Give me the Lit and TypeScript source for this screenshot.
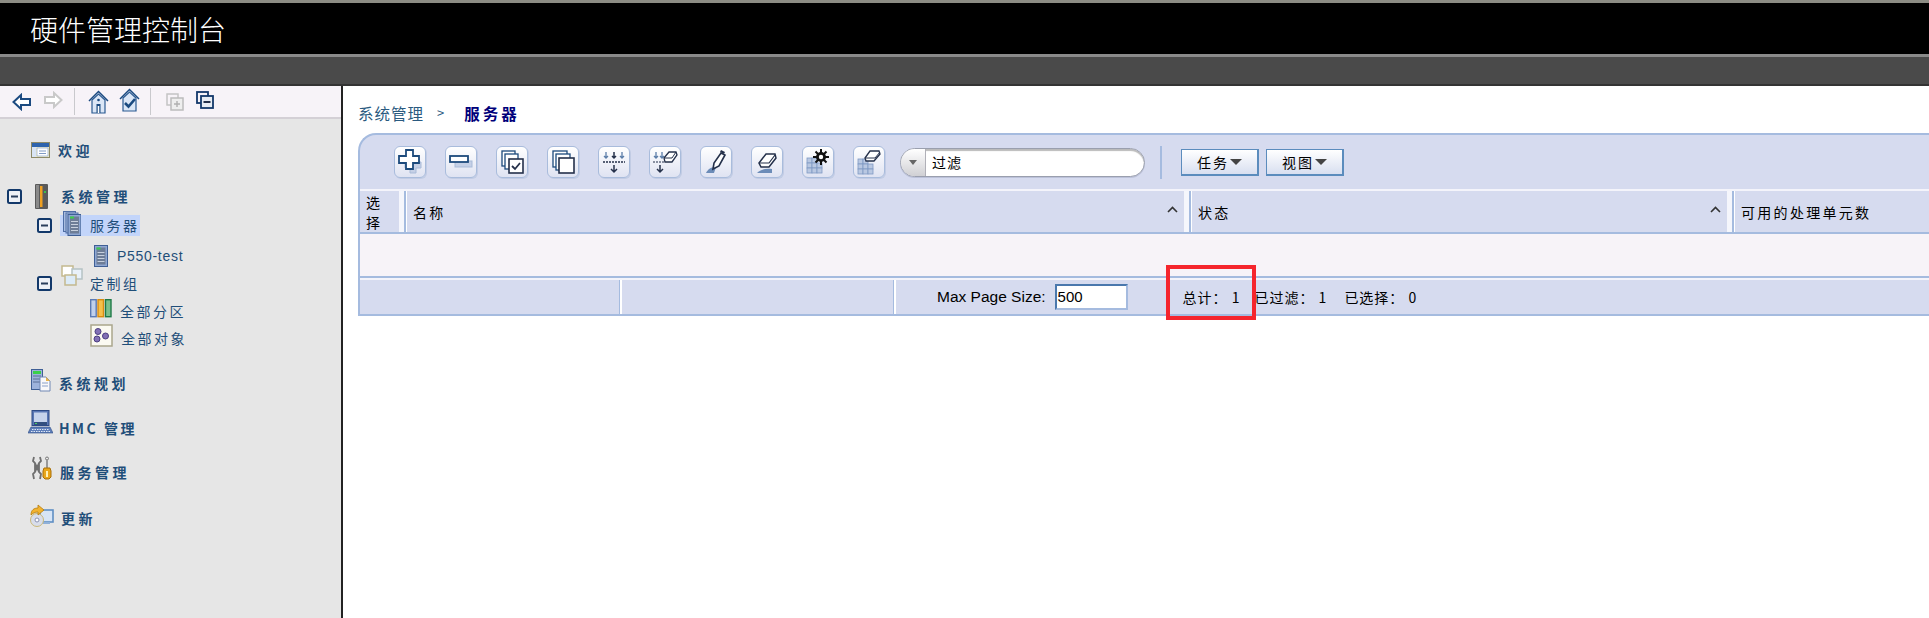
import { LitElement, html, css, svg } from "lit";
import { customElement } from "lit/decorators.js";

const NAVY = "#1c4a7c";
const expander = html`<svg class="exp" width="15" height="15" viewBox="0 0 15 15"><rect x="1" y="1" width="13" height="13" rx="1.5" fill="#eef1f6" stroke="#12386a" stroke-width="2"/><rect x="4" y="6.5" width="7" height="2" fill="#2a3f5c"/></svg>`;

const tb = (body: unknown) => html`<button class="tbtn"><svg width="26" height="26" viewBox="0 0 26 26" fill="none">${body}</svg></button>`;

const toolIcons = [
  svg`<path d="M10 9V4h6v5h5v6h-5v5h-6v-5H5V9z" transform="translate(3 4)" fill="#c5d0e6" stroke="#a9bbd8"/><path d="M9 7V1h7v6h6v7h-6v6H9v-6H2V7z" fill="#fff" stroke="${NAVY}" stroke-width="1.8"/>`,
  svg`<rect x="7" y="12" width="17" height="6" fill="#c5d0e6" stroke="#a9bbd8"/><rect x="2" y="7" width="18" height="6" fill="#fff" stroke="${NAVY}" stroke-width="1.8"/>`,
  svg`<rect x="3" y="2" width="13" height="15" fill="#fff" stroke="${NAVY}" stroke-width="1.3"/><rect x="6" y="5" width="13" height="15" fill="#fff" stroke="${NAVY}" stroke-width="1.3"/><rect x="10" y="10" width="14" height="14" fill="#fff" stroke="#24304a" stroke-width="1.6"/><path d="M13 17l3 3 5-6" stroke="#24304a" stroke-width="1.8"/>`,
  svg`<rect x="3" y="2" width="14" height="16" fill="#fff" stroke="${NAVY}" stroke-width="1.3"/><rect x="6" y="5" width="14" height="16" fill="#fff" stroke="${NAVY}" stroke-width="1.3"/><rect x="9" y="9" width="15" height="15" fill="#fff" stroke="#24304a" stroke-width="1.6"/>`,
  svg`<path d="M5 3v6M3 7l2 2 2-2M21 3v6M19 7l2 2 2-2" stroke="#5a7ca8" stroke-width="1.3"/><path d="M13 3v6M11 7l2 2 2-2" stroke="#24304a" stroke-width="1.5"/><path d="M2 13h22" stroke="#24304a" stroke-width="1.3" stroke-dasharray="2 1"/><path d="M13 16v7M10 20l3 3 3-3" stroke="#24304a" stroke-width="1.5"/>`,
  svg`<path d="M4 3v6M2 7l2 2 2-2M10 3v6M8 7l2 2 2-2" stroke="#5a7ca8" stroke-width="1.3"/><path d="M1 13h11" stroke="#24304a" stroke-dasharray="2 1"/><path d="M8 16v7M5 20l3 3 3-3" stroke="#24304a" stroke-width="1.5"/><path d="M12 9l5-6h7l1 3-5 7h-7z" fill="#fff" stroke="#24304a" stroke-width="1.3"/><path d="M12 9h8l4-6" stroke="#24304a"/>`,
  svg`<path d="M3 24c2-4 5-6 10-6l-2 6z" fill="#6c8cb8"/><path d="M10 20l1-6 7-10 4 2-6 11z" fill="#fff" stroke="#24304a" stroke-width="1.6"/><path d="M17 3l1-2 4 2-1 2z" fill="#24304a"/>`,
  svg`<path d="M3 24c3-3 8-5 15-4v4z" fill="#6c8cb8"/><path d="M5 14l7-9h9l1 4-7 9H7z" fill="#fff" stroke="#24304a" stroke-width="1.5"/><path d="M5 14h10l6-8" stroke="#24304a" stroke-width="1.2"/>`,
  svg`<g fill="#b9c8e2" stroke="#7f9ac4" stroke-width=".8"><rect x="2" y="9" width="5" height="5"/><rect x="7" y="9" width="5" height="5"/><rect x="2" y="14" width="5" height="5"/><rect x="7" y="14" width="5" height="5"/><rect x="12" y="14" width="5" height="5"/><rect x="2" y="19" width="5" height="5"/><rect x="7" y="19" width="5" height="5"/><rect x="12" y="19" width="5" height="5"/></g><circle cx="16" cy="8" r="5" fill="#111"/><path d="M16 0v16M8 8h16M10.500 2.500l11 11M21.500 2.500l-11 11" stroke="#111" stroke-width="2"/><circle cx="16" cy="8" r="2.200" fill="#fff"/>`,
  svg`<g fill="#b9c8e2" stroke="#7f9ac4" stroke-width=".8"><rect x="2" y="10" width="5" height="5"/><rect x="7" y="10" width="5" height="5"/><rect x="2" y="15" width="5" height="5"/><rect x="7" y="15" width="5" height="5"/><rect x="12" y="15" width="5" height="5"/><rect x="2" y="20" width="5" height="5"/><rect x="7" y="20" width="5" height="5"/><rect x="12" y="20" width="5" height="5"/></g><path d="M9 9l5-7h9l1 3-6 7H10z" fill="#fff" stroke="#24304a" stroke-width="1.3"/><path d="M9 9h10l5-6" stroke="#24304a"/>`,
];

const serverTall = (x: number, y: number) => svg`<g transform="translate(${x} ${y})"><rect width="13" height="21" fill="#8ea7d2" stroke="#3f5f95"/><rect x="2" y="2" width="9" height="17" fill="#6d7d97"/><rect x="2" y="2" width="4" height="2" fill="#3bd04a"/><path d="M3 7h7M3 10h7M3 13h7M3 16h7" stroke="#c7d0de"/></g>`;

const icons: Record<string, unknown> = {
  welcome: html`<svg width="19" height="16" viewBox="0 0 19 16"><rect x=".5" y=".5" width="18" height="15" fill="#f6efc8" stroke="#8d8a68"/><rect x="1" y="1" width="17" height="4" fill="#2e64ad"/><rect x="1" y="5" width="4" height="10" fill="#d9e5f5"/><rect x="6" y="6" width="11" height="8" fill="#fff" stroke="#8aa6d0" stroke-width=".7"/><path d="M8 9h7M8 11.500h7" stroke="#7f9ac4"/></svg>`,
  sys: html`<svg width="13" height="25" viewBox="0 0 13 25"><rect width="13" height="25" rx="1" fill="#5a5a5a"/><rect x="1" y="1" width="3" height="23" fill="#8a8a8a"/><rect x="5" y="2" width="2.500" height="21" fill="#f0a020"/><rect x="9" y="7" width="2" height="2" fill="#3bc04a"/></svg>`,
  servers: html`<svg width="18" height="25" viewBox="0 0 18 25"><rect x=".5" y=".5" width="12" height="20" fill="#a9bde0" stroke="#4f6ea5"/><rect x="3" y="2" width="12" height="20" fill="#a9bde0" stroke="#4f6ea5"/>${serverTall(5, 3.5)}</svg>`,
  server: html`<svg width="14" height="22" viewBox="0 0 14 22">${serverTall(.5, .5)}</svg>`,
  group: html`<svg width="22" height="22" viewBox="0 0 22 22"><rect x="1" y="1" width="11" height="10" fill="#fff" stroke="#c4b98e" stroke-width="1.500"/><rect x="11" y="4" width="10" height="10" fill="#e9f1fa" stroke="#b5c2c4" stroke-width="1.500"/><rect x="4" y="10" width="11" height="10" fill="#dcebf8" stroke="#c4b98e" stroke-width="1.500"/></svg>`,
  parts: html`<svg width="22" height="19" viewBox="0 0 22 19"><rect x=".7" y=".7" width="5.500" height="17" fill="#c0d0ec" stroke="#5a7ab5" stroke-width="1.400"/><rect x="8" y=".7" width="5.500" height="17" fill="#f6c04a" stroke="#d98c10" stroke-width="1.400"/><rect x="15.500" y=".7" width="5.500" height="17" fill="#7cc08c" stroke="#1f7a48" stroke-width="1.400"/></svg>`,
  objs: html`<svg width="23" height="23" viewBox="0 0 23 23"><rect x="1" y="1" width="21" height="21" fill="#fbfaf2" stroke="#aaa68c" stroke-width="1.500"/><circle cx="8" cy="7.500" r="3" fill="#8270b5" stroke="#4c3f80"/><circle cx="7" cy="15" r="3" fill="#8270b5" stroke="#4c3f80"/><circle cx="15.500" cy="12" r="3" fill="#8270b5" stroke="#4c3f80"/></svg>`,
  plan: html`<svg width="20" height="23" viewBox="0 0 20 23"><rect x=".5" y=".5" width="11" height="20" fill="#9db3dc" stroke="#3f5f95"/><rect x="2" y="2" width="8" height="3" fill="#3bd04a"/><path d="M2 7h8M2 10h8M2 13h8" stroke="#5a6f96"/><path d="M9 8h6l4 4v10H9z" fill="#f8f8fa" stroke="#7088b4"/><path d="M15 8v4h4z" fill="#e8b34a"/><path d="M11 14h6M11 17h6" stroke="#8aa0c8"/></svg>`,
  hmc: html`<svg width="25" height="24" viewBox="0 0 25 24"><rect x="4" y=".5" width="17" height="15" fill="#5a78b5" stroke="#2c4a85"/><rect x="6" y="2.500" width="13" height="10" fill="#c6d4ec"/><rect x="6" y="12" width="13" height="3" fill="#33507f"/><rect x="7" y="13" width="2" height="1" fill="#4cd060"/><path d="M3 17h19l3 6H0z" fill="#5f7fba" stroke="#2c4a85" stroke-width=".6"/><path d="M4 19.500h17M3 21.500h19" stroke="#dfe8f6" stroke-dasharray="1.500 1"/></svg>`,
  svc: html`<svg width="21" height="24" viewBox="0 0 21 24"><path d="M3 1L2 5l2 2v9l-2 2 1 5M9 1l1 4-2 2v9l2 2-1 5M4 7l4 9M8 7l-4 9" fill="none" stroke="#6f6f6f" stroke-width="1.800"/><circle cx="16" cy="2.500" r="1.500" fill="none" stroke="#777"/><rect x="15" y="4" width="2" height="8" fill="#999"/><path d="M13 12h6l1 3v6l-2 2h-4l-2-2v-6z" fill="#e9a61a" stroke="#a86f08"/><rect x="15" y="15" width="2" height="6" fill="#fff2b8"/></svg>`,
  update: html`<svg width="24" height="23" viewBox="0 0 24 23"><rect x="10" y="6" width="13" height="12" fill="#d7e5f6" stroke="#5f8fc4" stroke-width="1.600"/><rect x="13" y="18" width="7" height="2" fill="#8fb0d8"/><circle cx="7" cy="16" r="6.500" fill="#d8ddea" stroke="#c9b878"/><circle cx="7" cy="16" r="2" fill="#fff" stroke="#8a92b0"/><path d="M1 11c0-5 3-7 7-7V1l6 5-6 5V8c-3 0-5 1-7 3z" fill="#f2b32f" stroke="#b57c0d" stroke-width=".8"/></svg>`,
};

const backArrow = html`<svg width="20" height="18" viewBox="0 0 20 18"><path d="M1.500 9L9 2v4h9v6H9v4z" fill="#fff" stroke="#1b4a80" stroke-width="2"/></svg>`;
const fwdArrow = html`<svg width="20" height="18" viewBox="0 0 20 18"><path d="M18.500 9L11 2v4H2v6h9v4z" fill="#fff" stroke="#c9c9c9" stroke-width="2"/></svg>`;
const home = html`<svg width="21" height="24" viewBox="0 0 21 24"><path d="M1 11L10.500 1.500 20 11" fill="none" stroke="#1b4a80" stroke-width="1.500"/><path d="M4 10l6.500-6 6.500 6v13H4z" fill="#dbe6f6" stroke="#2a5a92" stroke-width="1.200"/><circle cx="10.500" cy="10" r="1.300" fill="#1b4a80"/><rect x="8.500" y="14" width="4" height="9" fill="#1b4a80"/><rect x="9.700" y="16" width="1.600" height="7" fill="#fff"/></svg>`;
const homeCheck = html`<svg width="21" height="24" viewBox="0 0 21 24"><path d="M1 11L10.500 1.500 20 11" fill="none" stroke="#1b4a80" stroke-width="1.500"/><path d="M4 10l6.500-6 6.500 6v13H4z" fill="#dbe6f6" stroke="#2a5a92" stroke-width="1.200"/><path d="M6 15l3.500 3.500L16 11" fill="none" stroke="#1b4a80" stroke-width="2.600"/></svg>`;
const expandAll = html`<svg width="18" height="18" viewBox="0 0 18 18"><rect x="1" y="1" width="11" height="11" fill="none" stroke="#c4c4c4" stroke-width="1.500"/><rect x="5" y="5" width="12" height="12" fill="#eee" stroke="#bcbcbc" stroke-width="1.500"/><path d="M8 11h6M11 8v6" stroke="#b0b0b0" stroke-width="1.400"/></svg>`;
const collapseAll = html`<svg width="18" height="18" viewBox="0 0 18 18"><rect x="1" y="1" width="11" height="11" fill="none" stroke="#12386a" stroke-width="1.800"/><rect x="5" y="5" width="12" height="12" fill="#e8edf4" stroke="#12386a" stroke-width="1.800"/><path d="M7.500 11h7" stroke="#24304a" stroke-width="2"/></svg>`;

const caret = html`<svg class="caret" width="11" height="7" viewBox="0 0 11 7"><path d="M1 6l4.500-4.500L10 6" fill="none" stroke="#333" stroke-width="1.600"/></svg>`;

@customElement("app-root")
export class AppRoot extends LitElement {
  static styles = css`
    :host { display: block; width: 1929px; height: 618px; overflow: hidden; background: #fff; font-family: "Liberation Sans", "Noto Sans CJK SC", sans-serif; }
    .top { height: 54px; box-sizing: border-box; border-top: 3px solid #8c8c84; background: #000; color: #fff; display: flex; align-items: center; padding-left: 30px; font-family: "Noto Sans CJK SC", sans-serif; font-size: 28px; font-weight: 300; line-height: 1; }
    .bar { height: 32px; box-sizing: border-box; background: #4a4a4a; border-top: 3px solid #8a8a8a; border-bottom: 2px solid #333; }
    .main { display: flex; height: 532px; }
    .nav { width: 341px; box-sizing: content-box; flex: none; background: #e6e6e6; border-right: 2px solid #222; }
    .navtools { height: 31px; background: #f7f3f8; border-bottom: 2px solid #d4d0d6; display: flex; align-items: center; padding-left: 12px; }
    .navtools svg { flex: none; }
    .navtools .a2 { margin-left: 11px; }
    .navtools .sep { width: 1px; height: 27px; background: #c9c9cd; margin: 0 13px 0 11px; }
    .navtools .h2 { margin-left: 10px; }
    .navtools .sep2 { margin: 0 15px 0 10px; }
    .navtools .c2 { margin-left: 12px; }
    .tree { display: flex; flex-direction: column; padding-top: 17px; font-family: "Noto Sans CJK SC", sans-serif; color: #1f4e79; font-size: 14px; }
    .row { display: flex; align-items: center; height: 28px; white-space: nowrap; letter-spacing: 2.500px; }
    .row svg { flex: none; }
    .l0 { font-weight: 700; padding-left: 31px; letter-spacing: 3.500px; }
    .l0 svg { margin-right: 8px; }
    .lsys { font-weight: 700; padding-left: 7px; margin-top: 18px; letter-spacing: 3.500px; }
    .lsys .exp { margin-right: 13px; }
    .lsys svg:nth-child(2) { margin-right: 13px; }
    .l1 { padding-left: 37px; margin-top: 1px; }
    .l1 .exp { margin-right: 9px; }
    .sel { display: flex; align-items: center; background: #c3d5fa; height: 21px; padding: 0 0 0 3px; margin-left: -1px; }
    .sel svg { margin: -4px 9px 0 0; }
    .srv { padding-left: 94px; margin-top: 3px; }
    .srv svg { margin-right: 9px; }
    .srvname { font-family: "Liberation Sans", sans-serif; letter-spacing: .7px; font-size: 14px; }
    .grp { margin-top: -1px; }
    .grp .gi { margin: -10px 7px 0 0; }
    .l2 { padding-left: 90px; }
    .l2 svg { margin: -6px 8px 0 0; }
    .l2b { margin-top: -1px; }
    .m1 { margin-top: 17px; padding-left: 31px; }
    .m1 svg { margin-top: -6px; }
    .m2 { margin-top: 17px; padding-left: 28px; letter-spacing: 2.500px; }
    .m2 svg { margin-right: 6px; margin-top: -12px; }
    .m3 { margin-top: 16px; padding-left: 31px; }
    .m3 svg { margin-top: -8px; }
    .m4 { margin-top: 18px; padding-left: 30px; }
    .m4 svg { margin-right: 7px; margin-top: -6px; }
    .content { flex: 1; min-width: 0; padding-left: 15px; }
    .crumb { height: 47px; box-sizing: border-box; padding-top: 7px; font-family: "Noto Sans CJK SC", sans-serif; font-size: 15.500px; line-height: 20px; color: #2a5a80; letter-spacing: 1px; display: flex; align-items: center; }
    .crumb .gt { margin: 0 19px 0 13px; font-size: 13px; }
    .crumb b { color: #00007a; letter-spacing: 3px; font-weight: 700; }
    .panel { position: relative; height: 183px; box-sizing: border-box; background: #d6dbef; border: 2px solid #a5bbdf; border-right: 0; border-top-left-radius: 18px; display: flex; flex-direction: column; font-family: "Noto Sans CJK SC", sans-serif; font-size: 14px; color: #000; }
    .tools { height: 56px; flex: none; display: flex; align-items: center; padding-left: 34px; box-sizing: border-box; border-bottom: 2px solid #f4f4fb; }
    .tbtn { width: 32px; height: 32px; flex: none; padding: 0; margin: 0 19px 0 0; box-sizing: border-box; border: 1px solid #a9bcdc; border-radius: 6px; background: linear-gradient(#fff, #dfe3f2); display: flex; align-items: center; justify-content: center; box-shadow: 1px 1px 0 #c2cce4; }
    .tbtn:nth-of-type(10) { margin-right: 15px; }
    .filter { width: 245px; height: 29px; flex: none; box-sizing: border-box; border: 1px solid #9a9fae; border-radius: 15px; background: #fff; display: flex; align-items: center; overflow: hidden; box-shadow: inset 0 2px 1px #bbb, 0 1px 0 #bcc2da; }
    .fdrop { width: 24px; height: 100%; background: linear-gradient(#fff, #d0d0d4); border-right: 1px solid #b0b0b8; display: flex; align-items: center; justify-content: center; flex: none; }
    .fdrop i { border: 4px solid transparent; border-top: 5px solid #666; border-bottom: 0; width: 0; height: 0; }
    .ftext { padding-left: 6px; letter-spacing: 1px; }
    .vsep { width: 2px; height: 33px; background: #a5bbdf; margin: 0 19px 0 15px; flex: none; }
    .mbtn { width: 78px; height: 27px; flex: none; box-sizing: border-box; border: 1px solid #5b8cbd; border-bottom-width: 2px; border-right-width: 2px; background: linear-gradient(#fff, #d8dff0); display: flex; align-items: center; justify-content: center; gap: 0; font: inherit; letter-spacing: 2px; padding: 0; margin-right: 7px; color: #000; }
    .mbtn i { width: 0; height: 0; border-left: 6px solid transparent; border-right: 6px solid transparent; border-top: 6px solid #444; border-bottom: 0; margin-left: 1px; }
    .thead { height: 43px; flex: none; display: grid; grid-template-columns: 39px 8px 777px 8px 535px 8px 1fr; border-bottom: 2px solid #a5bbdf; box-sizing: border-box; }
    .th { display: flex; align-items: center; justify-content: space-between; padding: 0 6px; letter-spacing: 2.300px; white-space: nowrap; }
    .th.sm { padding: 0 0 0 6px; line-height: 20px; white-space: normal; width: 16px; letter-spacing: 0; }
    .caret { margin: -4px 0 0 0; }
    .split { background: linear-gradient(90deg, #f5f6fc 0 60%, #a5bbdf 60% 85%, #fff 85%); }
    .tbody { height: 44px; flex: none; background: #f7f3f8; border-bottom: 2px solid #a5bbdf; box-sizing: border-box; }
    .tfoot { flex: 1; display: flex; align-items: center; border-top: 2px solid #f4f4fb; box-sizing: border-box; }
    .fc { height: 100%; flex: none; width: 259px; box-sizing: border-box; }
    .fc.b { width: 271px; }
    .fs { height: 100%; width: 3px; flex: none; background: linear-gradient(90deg, #a5bbdf 50%, #fff 50%); }
    .mps { font-family: "Liberation Sans", sans-serif; font-size: 15.500px; margin-left: 41px; flex: none; }
    .input { width: 73px; height: 26px; flex: none; box-sizing: border-box; margin-left: 9px; border: 2px solid #5b8cbd; border-color: #4a78ad #a5bbdf #a5bbdf #4a78ad; background: #fff; font-family: "Liberation Sans", sans-serif; font-size: 15px; padding-left: 1px; line-height: 22px; }
    .st { flex: none; white-space: nowrap; letter-spacing: 1px; }
    .st1 { margin-left: 55px; }
    .st2 { margin-left: 14px; }
    .st3 { margin-left: 17px; }
    .mark { position: absolute; left: 806px; top: 130px; width: 90px; height: 55px; box-sizing: border-box; border: 4px solid #f5252d; pointer-events: none; }
  `;

  render() {
    return html`
      <div class="top">硬件管理控制台</div>
      <div class="bar"></div>
      <div class="main">
        <nav class="nav">
          <div class="navtools">
            ${backArrow}<span class="a2">${fwdArrow}</span>
            <span class="sep"></span>
            ${home}<span class="h2">${homeCheck}</span>
            <span class="sep sep2"></span>
            ${expandAll}<span class="c2">${collapseAll}</span>
          </div>
          <div class="tree">
            <div class="row l0">${icons.welcome}<span>欢迎</span></div>
            <div class="row lsys">${expander}${icons.sys}<span>系统管理</span></div>
            <div class="row l1">${expander}<span class="sel">${icons.servers}<span>服务器</span></span></div>
            <div class="row srv">${icons.server}<span class="srvname">P550-test</span></div>
            <div class="row l1 grp">${expander}<span class="gi">${icons.group}</span><span>定制组</span></div>
            <div class="row l2">${icons.parts}<span>全部分区</span></div>
            <div class="row l2 l2b">${icons.objs}<span>全部对象</span></div>
            <div class="row l0 m1">${icons.plan}<span>系统规划</span></div>
            <div class="row l0 m2">${icons.hmc}<span>HMC 管理</span></div>
            <div class="row l0 m3">${icons.svc}<span>服务管理</span></div>
            <div class="row l0 m4">${icons.update}<span>更新</span></div>
          </div>
        </nav>
        <section class="content">
          <div class="crumb"><span>系统管理</span><span class="gt">&gt;</span><b>服务器</b></div>
          <div class="panel">
            <div class="tools">
              ${toolIcons.map((i) => tb(i))}
              <div class="filter"><span class="fdrop"><i></i></span><span class="ftext">过滤</span></div>
              <span class="vsep"></span>
              <button class="mbtn">任务<i></i></button>
              <button class="mbtn">视图<i></i></button>
            </div>
            <div class="thead">
              <div class="th sm">选择</div><div class="split"></div>
              <div class="th">名称${caret}</div><div class="split"></div>
              <div class="th">状态${caret}</div><div class="split"></div>
              <div class="th">可用的处理单元数</div>
            </div>
            <div class="tbody"></div>
            <div class="tfoot">
              <span class="fc"></span><span class="fs"></span>
              <span class="fc b"></span><span class="fs"></span>
              <span class="mps">Max Page Size:</span>
              <span class="input">500</span>
              <span class="st st1">总计： 1</span>
              <span class="st st2">已过滤： 1</span>
              <span class="st st3">已选择： 0</span>
            </div>
            <div class="mark"></div>
          </div>
        </section>
      </div>
    `;
  }
}
